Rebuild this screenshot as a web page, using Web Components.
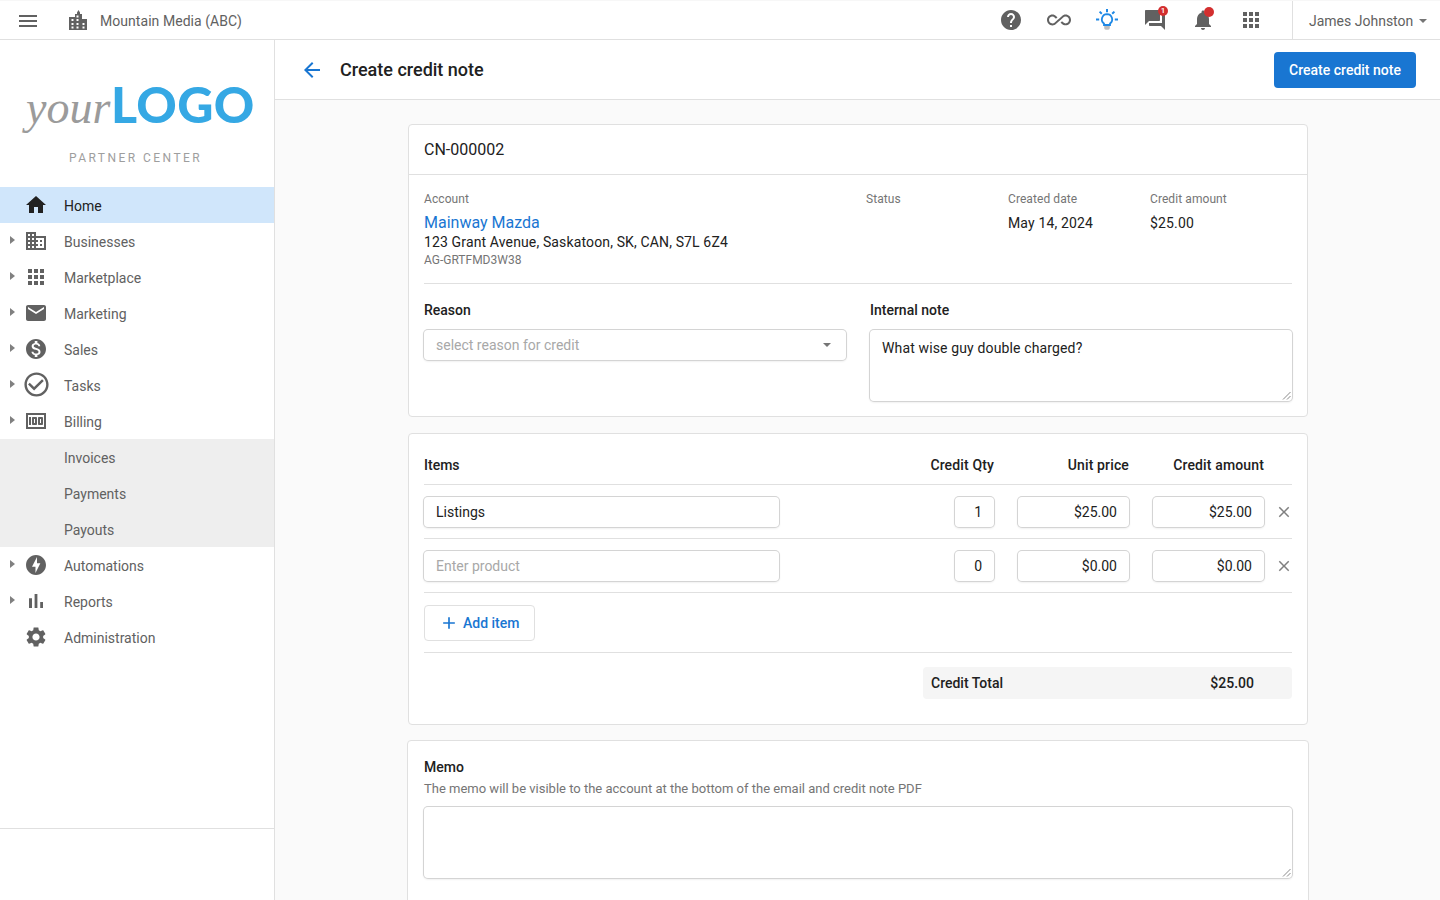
<!doctype html>
<html lang="en">
<head>
<meta charset="utf-8">
<title>Create credit note</title>
<style>
html,body{margin:0;height:100%;overflow:hidden;background:#fafafa}
body{font:14px/20px Roboto,"Liberation Sans",sans-serif;color:#212121}
</style>
</head>
<body>
<app-shell>
  <app-topbar slot="top"></app-topbar>
  <app-sidebar slot="side">
    <nav-item icon="home" active>Home</nav-item>
    <nav-item icon="business" arrow>Businesses</nav-item>
    <nav-item icon="apps" arrow>Marketplace</nav-item>
    <nav-item icon="email" arrow>Marketing</nav-item>
    <nav-item icon="money" arrow>Sales</nav-item>
    <nav-item icon="check" arrow big>Tasks</nav-item>
    <nav-item icon="billing" arrow>Billing</nav-item>
    <nav-item sub>Invoices</nav-item>
    <nav-item sub>Payments</nav-item>
    <nav-item sub>Payouts</nav-item>
    <nav-item icon="bolt" arrow>Automations</nav-item>
    <nav-item icon="bars" arrow>Reports</nav-item>
    <nav-item icon="settings">Administration</nav-item>
  </app-sidebar>
  <page-head slot="head" title="Create credit note" action="Create credit note"></page-head>
  <div slot="main">
    <note-summary></note-summary>
    <note-items></note-items>
    <note-memo></note-memo>
  </div>
</app-shell>

<script>
const P={
menu:'M3 18h18v-2H3v2zm0-5h18v-2H3v2zm0-7v2h18V6H3z',
help:'M12 2C6.48 2 2 6.48 2 12s4.48 10 10 10 10-4.48 10-10S17.52 2 12 2zm1 17h-2v-2h2v2zm2.07-7.75l-.9.92C13.45 12.9 13 13.5 13 15h-2v-.5c0-1.1.45-2.1 1.17-2.83l1.24-1.26c.37-.36.59-.86.59-1.41 0-1.1-.9-2-2-2s-2 .9-2 2H8c0-2.21 1.79-4 4-4s4 1.79 4 4c0 .88-.36 1.68-.93 2.25z',
infinity:'M18.6 6.62c-1.44 0-2.8.56-3.77 1.53L12 10.66 10.48 12h.01L7.8 14.39c-.64.64-1.49.99-2.4.99-1.87 0-3.39-1.51-3.39-3.38S3.53 8.62 5.4 8.62c.91 0 1.76.35 2.44 1.03l1.13 1 1.51-1.34L9.22 8.2C8.2 7.18 6.84 6.62 5.4 6.62 2.42 6.62 0 9.04 0 12s2.42 5.38 5.4 5.38c1.44 0 2.8-.56 3.77-1.53l2.83-2.5.01.01L13.52 12h-.01l2.69-2.39c.64-.64 1.49-.99 2.4-.99 1.87 0 3.39 1.51 3.39 3.38s-1.52 3.38-3.39 3.38c-.9 0-1.76-.35-2.44-1.03l-1.14-1.01-1.51 1.34 1.27 1.12c1.02 1.01 2.37 1.57 3.82 1.57 2.98 0 5.4-2.41 5.4-5.38s-2.42-5.37-5.4-5.37z',
forum:'M21 6h-2v9H6v2c0 .55.45 1 1 1h11l4 4V7c0-.55-.45-1-1-1zm-4 6V3c0-.55-.45-1-1-1H3c-.55 0-1 .45-1 1v14l4-4h10c.55 0 1-.45 1-1z',
bell:'M12 22c1.1 0 2-.9 2-2h-4c0 1.1.89 2 2 2zm6-6v-5c0-3.07-1.64-5.64-4.5-6.32V4c0-.83-.67-1.5-1.5-1.5s-1.5.67-1.5 1.5v.68C7.63 5.36 6 7.92 6 11v5l-2 2v1h16v-1l-2-2z',
apps:'M4 8h4V4H4v4zm6 12h4v-4h-4v4zm-6 0h4v-4H4v4zm0-6h4v-4H4v4zm6 0h4v-4h-4v4zm6-10v4h4V4h-4zm-6 4h4V4h-4v4zm6 6h4v-4h-4v4zm0 6h4v-4h-4v4z',
home:'M10 20v-6h4v6h5v-8h3L12 3 2 12h3v8z',
business:'M12 7V3H2v18h20V7H12zM6 19H4v-2h2v2zm0-4H4v-2h2v2zm0-4H4V9h2v2zm0-4H4V5h2v2zm4 12H8v-2h2v2zm0-4H8v-2h2v2zm0-4H8V9h2v2zm0-4H8V5h2v2zm10 12h-8v-2h2v-2h-2v-2h2v-2h-2V9h8v10zm-2-8h-2v2h2v-2zm0 4h-2v2h2v-2z',
email:'M20 4H4c-1.1 0-1.99.9-1.99 2L2 18c0 1.1.9 2 2 2h16c1.1 0 2-.9 2-2V6c0-1.1-.9-2-2-2zm0 4l-8 5-8-5V6l8 5 8-5v2z',
money:'M12 2C6.48 2 2 6.48 2 12s4.48 10 10 10 10-4.48 10-10S17.52 2 12 2zm1.41 16.09V20h-2.67v-1.93c-1.71-.36-3.16-1.46-3.27-3.4h1.96c.1 1.05.82 1.87 2.65 1.87 1.96 0 2.4-.98 2.4-1.59 0-.83-.44-1.61-2.67-2.14-2.48-.6-4.18-1.62-4.18-3.67 0-1.72 1.39-2.84 3.11-3.21V4h2.67v1.95c1.86.45 2.79 1.86 2.85 3.39H14.3c-.05-1.11-.64-1.87-2.22-1.87-1.5 0-2.4.68-2.4 1.64 0 .84.65 1.39 2.67 1.91s4.18 1.39 4.18 3.91c-.01 1.83-1.38 2.83-3.12 3.16z',
check:'M16.59 7.58L10 14.17l-3.59-3.58L5 12l5 5 8-8zM12 2C6.48 2 2 6.48 2 12s4.48 10 10 10 10-4.48 10-10S17.52 2 12 2zm0 18c-4.42 0-8-3.58-8-8s3.58-8 8-8 8 3.58 8 8-3.58 8-8 8z',
billing:'M5 8h2v8H5zm7 0H9c-.55 0-1 .45-1 1v6c0 .55.45 1 1 1h3c.55 0 1-.45 1-1V9c0-.55-.45-1-1-1zm-1 6h-1v-4h1v4zm7-6h-3c-.55 0-1 .45-1 1v6c0 .55.45 1 1 1h3c.55 0 1-.45 1-1V9c0-.55-.45-1-1-1zm-1 6h-1v-4h1v4zM2 4v16h20V4H2zm2 14V6h16v12H4z',
bolt:'M12 2.02c-5.51 0-9.98 4.47-9.98 9.98s4.47 9.98 9.98 9.98 9.98-4.47 9.98-9.98S17.51 2.02 12 2.02zM11.48 20v-6.26H8L13 4v6.26h3.35L11.48 20z',
bars:'M5 9.2h3V19H5zM10.6 5h2.8v14h-2.8zm5.6 8H19v6h-2.8z',
settings:'M19.14 12.94c.04-.3.06-.61.06-.94 0-.32-.02-.64-.07-.94l2.03-1.58c.18-.14.23-.41.12-.61l-1.92-3.32c-.12-.22-.37-.29-.59-.22l-2.39.96c-.5-.38-1.03-.7-1.62-.94l-.36-2.54c-.04-.24-.24-.41-.48-.41h-3.84c-.24 0-.43.17-.47.41l-.36 2.54c-.59.24-1.13.57-1.62.94l-2.39-.96c-.22-.08-.47 0-.59.22L2.74 8.87c-.12.21-.08.47.12.61l2.03 1.58c-.05.3-.09.63-.09.94s.02.64.07.94l-2.03 1.58c-.18.14-.23.41-.12.61l1.92 3.32c.12.22.37.29.59.22l2.39-.96c.5.38 1.03.7 1.62.94l.36 2.54c.05.24.24.41.48.41h3.84c.24 0 .44-.17.47-.41l.36-2.54c.59-.24 1.13-.56 1.62-.94l2.39.96c.22.08.47 0 .59-.22l1.92-3.32c.12-.22.07-.47-.12-.61l-2.01-1.58zM12 15.6c-1.98 0-3.6-1.62-3.6-3.6s1.62-3.6 3.6-3.6 3.6 1.62 3.6 3.6-1.62 3.6-3.6 3.6z',
back:'M20 11H7.83l5.59-5.59L12 4l-8 8 8 8 1.41-1.41L7.83 13H20v-2z',
add:'M19 13h-6v6h-2v-6H5v-2h6V5h2v6h6v2z',
close:'M19 6.41L17.59 5 12 10.59 6.41 5 5 6.41 10.59 12 5 17.59 6.41 19 12 13.41 17.59 19 19 17.59 13.41 12z',
city:'M3 9h6V6h2V4.5L12.5 2 14 4.5V6h2v5h5v11H3V9zM5.5 11v2h2v-2h-2zm5 0v2h2v-2h-2zm-5 4v2h2v-2h-2zm5 0v2h2v-2h-2zm6 0v2h2v-2h-2zm-11 3.6v2h2v-2h-2zm5 0v2h2v-2h-2zm6 0v2h2v-2h-2zM10.5 7.4v2h2v-2h-2z'
};
const ico=(n,s=24,c='currentColor',extra='')=>`<svg width="${s}" height="${s}" viewBox="0 0 24 24" fill="${c}" style="display:block;flex:none;${extra}"><path fill-rule="evenodd" d="${P[n]}"/></svg>`;
class Base extends HTMLElement{
  constructor(){super();this.attachShadow({mode:'open'})}
  render(h){this.shadowRoot.innerHTML=h}
}
const def=(n,c)=>customElements.define(n,c);

def('app-shell',class extends Base{connectedCallback(){this.render(`<style>
:host{display:grid;grid-template-columns:275px 1fr;grid-template-rows:40px 60px 1fr;height:100vh;overflow:hidden;background:#fafafa}
.top{grid-column:1/3;grid-row:1}.side{grid-column:1;grid-row:2/4;min-height:0}
.head{grid-column:2;grid-row:2}
.main{grid-column:2;grid-row:3;overflow:hidden;padding-top:24px;min-height:0}
</style>
<div class="top"><slot name="top"></slot></div>
<div class="side"><slot name="side"></slot></div>
<div class="head"><slot name="head"></slot></div>
<div class="main"><slot name="main"></slot></div>`)}});

def('app-topbar',class extends Base{connectedCallback(){
const btn=(i,c='')=>`<div class="b">${i}${c}</div>`;
const bulb=`<svg width="24" height="24" viewBox="0 0 24 24" fill="none" stroke="#1e88e5" stroke-width="2"><path d="M12 1v3.2M4.6 3.6l2.2 2.2M19.4 3.6l-2.2 2.2M1 11.5h3.2M19.8 11.5H23"/><path d="M12 6.2a5.2 5.2 0 0 0-3 9.4V17h6v-1.4a5.2 5.2 0 0 0-3-9.4z" stroke-width="1.8" fill="#fff"/><path d="M9.2 18h5.6v2.2a2 2 0 0 1-2 1.6h-1.6a2 2 0 0 1-2-1.6z" fill="#bdbdbd" stroke="none"/></svg>`;
this.render(`<style>
:host{display:flex;align-items:center;height:40px;box-sizing:border-box;background:#fff;border-bottom:1px solid #e0e0e0;border-top:1px solid #f7f7f7;color:#616161;font-size:14px}
.menu{margin-left:16px;margin-top:1px}.city{margin-left:26px}.org{margin-left:10px;margin-top:1px;letter-spacing:.05px}
.icons{margin-left:auto;margin-right:17px;display:flex}
.b{position:relative;width:48px;height:38px;display:flex;align-items:center;justify-content:center}
.badge{position:absolute;left:27px;top:5px;width:10px;height:10px;border-radius:50%;background:#d32f2f;color:#fff;font:500 8px/10px Roboto,sans-serif;text-align:center}
.user{width:148px;box-sizing:border-box;height:38px;border-left:1px solid #e0e0e0;padding:1px 0 0 16px;display:flex;align-items:center}
.car{width:0;height:0;margin-left:6px;border:4px solid transparent;border-top-color:#757575;border-bottom:0}
</style>
<div class="menu">${ico('menu')}</div>
<div class="city">${ico('city')}</div>
<div class="org">Mountain Media (ABC)</div>
<div class="icons">
${btn(ico('help'))}${btn(ico('infinity'))}${btn(bulb)}
${btn(ico('forum'),'<div class="badge">1</div>')}
${btn(ico('bell'),'<div class="badge" style="left:25px;top:6px"></div>')}
${btn(ico('apps'))}
</div>
<div class="user">James Johnston<span class="car"></span></div>`)}});

def('app-sidebar',class extends Base{connectedCallback(){this.render(`<style>
:host{display:flex;flex-direction:column;height:100%;box-sizing:border-box;background:#fff;border-right:1px solid #e0e0e0}
.brand{height:147px;box-sizing:border-box;padding-top:33px}
.logo{display:flex;align-items:baseline;padding-left:26px;height:62px;line-height:62px}
.your{font:italic 400 46px/62px "Liberation Serif",serif;color:#9b9b9b;width:85px;flex:none}
.mark{font:900 50px/62px Lato,sans-serif;color:#35a8e4;letter-spacing:.3px}
.pc{margin-top:15px;padding-left:69px;font-size:12px;line-height:16px;letter-spacing:2.45px;color:#9e9e9e}
.nav{flex:1}
.foot{height:72px;border-top:1px solid #e0e0e0;box-sizing:border-box;flex:none}
</style>
<div class="brand"><div class="logo"><span class="your">your</span><span class="mark">LOGO</span></div><div class="pc">PARTNER CENTER</div></div>
<div class="nav"><slot></slot></div><div class="foot"></div>`)}});

def('nav-item',class extends Base{connectedCallback(){
const i=this.getAttribute('icon');
this.render(`<style>
:host{display:flex;align-items:center;height:36px;color:#616161;font-size:14px;position:relative}
:host([active]){background:#d0e6fb;color:#212121}
:host([sub]){background:#eeeeee}
.ar{width:0;height:0;border:4.5px solid transparent;border-left:5px solid #808080;border-right:0;margin:-2px 0 0 10px;flex:none}
.sl{width:15px;flex:none}
.ic{width:30px;margin-left:6px;flex:none;display:flex;justify-content:center;margin-top:-1px}
.t{margin-left:13px;padding-top:1px}
:host([sub]) .t{margin-left:64px}
</style>
${this.hasAttribute('sub')?'':(this.hasAttribute('arrow')?'<span class="ar"></span>':'<span class="sl"></span>')}
${i?`<span class="ic">${ico(i,this.hasAttribute('big')?29:24)}</span>`:''}
<span class="t"><slot></slot></span>`)}});

def('page-head',class extends Base{connectedCallback(){this.render(`<style>
:host{display:flex;align-items:center;height:60px;box-sizing:border-box;background:#fff;border-bottom:1px solid #e0e0e0;padding:0 24px 0 25px}
.t{margin-left:16px;font-size:18px;font-weight:500;line-height:24px;color:#212121}
.a{margin-left:auto;height:36px;width:142px;background:#1976d2;color:#fff;border-radius:4px;font-weight:500;display:flex;align-items:center;justify-content:center}
</style>
${ico('back',24,'#1976d2')}
<div class="t">${this.getAttribute('title')}</div>
<div class="a">${this.getAttribute('action')}</div>`);this.removeAttribute('title')}});

def('x-panel',class extends Base{connectedCallback(){this.render(`<style>
:host{display:block;box-sizing:border-box;width:900px;margin-left:133px;background:#fff;border:1px solid #e0e0e0;border-radius:4px}
:host([wide]){width:902px;margin-left:132px}
</style><slot></slot>`)}});

def('x-field',class extends Base{connectedCallback(){
const a=n=>this.getAttribute(n);
const v=a('value'),ph=a('placeholder');
const grip=this.hasAttribute('multi')?`<svg class="g" width="9" height="9" viewBox="0 0 9 9" stroke="#8a8a8a" fill="none"><path d="M1 8.5L8.5 1M5 8.5L8.5 5"/></svg>`:'';
this.render(`<style>
:host{display:block;position:relative;box-sizing:border-box;height:30px;background:#fff;border-radius:4px;box-shadow:0 0 0 1px #d4d4d4,0 1px 2px 1px rgba(0,0,0,.06);font-size:14px;padding:5px 12px;color:#212121;text-align:${a('align')||'left'}}
:host([multi]){padding-top:8px;letter-spacing:.14px}
.ph{color:#a8a8a8}
.car{position:absolute;right:15px;top:13px;width:0;height:0;border:4px solid transparent;border-top-color:#757575;border-bottom:0}
.g{position:absolute;right:1px;bottom:1px}
</style>
${v!==null?`<span>${v}</span>`:ph?`<span class="ph">${ph}</span>`:''}
${this.hasAttribute('select')?'<span class="car"></span>':''}${grip}`)}});

def('note-summary',class extends Base{connectedCallback(){this.render(`<style>
:host{display:block}
.hd{height:49px;border-bottom:1px solid #e0e0e0;padding-left:15px;font-size:16px;line-height:50px;color:#212121}
.body{padding:16px 15px 15px}
.meta{display:grid;grid-template-columns:1fr 142px 142px 142px;padding-bottom:14px;border-bottom:1px solid #e0e0e0}
.l{font-size:12px;line-height:16px;color:#757575;margin-bottom:6px;letter-spacing:.08px}
.v{line-height:20px;color:#212121;letter-spacing:.15px}
.link{font-size:16px;line-height:20px;color:#1976d2}
.addr{line-height:18px;letter-spacing:.135px}.id{font-size:12px;line-height:18px;color:#757575}
.form{display:grid;grid-template-columns:422px 422px;column-gap:24px;align-items:start;padding-top:16px}
.fl{font-weight:500;line-height:20px;margin-bottom:10px}
</style>
<x-panel>
<div class="hd">CN-000002</div>
<div class="body">
<div class="meta">
<div><div class="l">Account</div><div class="link">Mainway Mazda</div><div class="addr">123 Grant Avenue, Saskatoon, SK, CAN, S7L 6Z4</div><div class="id">AG-GRTFMD3W38</div></div>
<div><div class="l">Status</div></div>
<div><div class="l">Created date</div><div class="v">May 14, 2024</div></div>
<div><div class="l">Credit amount</div><div class="v">$25.00</div></div>
</div>
<div class="form">
<div><div class="fl">Reason</div><x-field select placeholder="select reason for credit"></x-field></div>
<div><div class="fl">Internal note</div><x-field multi value="What wise guy double charged?" style="height:71px"></x-field></div>
</div>
</div>
</x-panel>`)}});

def('item-row',class extends Base{connectedCallback(){
const a=n=>this.getAttribute(n);
const head=this.hasAttribute('head');
const cell=(v,w,ml)=>head?`<div class="h" style="width:${w}px;margin-left:${ml}px">${v}</div>`:
 `<x-field style="width:${w}px;margin-left:${ml}px;flex:none" align="right" value="${v}"></x-field>`;
this.render(`<style>
:host{display:flex;align-items:center;height:53px;border-bottom:1px solid #e0e0e0}
:host([head]){align-items:flex-start;padding-top:21px;box-sizing:content-box;height:29px;font-weight:500}
.p{width:355px;flex:none}
.sp{flex:1}
.h{display:flex;justify-content:flex-end;white-space:nowrap;line-height:20px;flex:none;letter-spacing:.14px}
.x{width:28px;display:flex;justify-content:flex-end;flex:none;color:#808080}
</style>
${head?`<div class="p">${a('name')}</div>`:`<x-field class="p" ${a('name')?`value="${a('name')}"`:'placeholder="Enter product"'}></x-field>`}
<div class="sp"></div>
${cell(a('qty'),39,0)}${cell(a('price'),111,24)}${cell(a('amount'),111,24)}
<div class="x">${head?'':ico('close',18,'currentColor','margin-right:-1px')}</div>`)}});

def('note-items',class extends Base{connectedCallback(){this.render(`<style>
:host{display:block;margin-top:16px}
.in{padding:0 15px 25px}
.add{padding:12px 0 11px;border-bottom:1px solid #e0e0e0}
.btn{display:flex;align-items:center;box-sizing:border-box;width:111px;height:36px;border:1px solid #e0e0e0;border-radius:4px;color:#1976d2;font-weight:500;padding-left:14px}
.btn span{margin-left:4px}
.tot{margin:14px 0 0 auto;width:369px;height:32px;box-sizing:border-box;background:#f5f5f5;border-radius:4px;display:flex;justify-content:space-between;align-items:center;padding:0 38px 0 8px;font-weight:500}
</style>
<x-panel>
<div class="in">
<item-row head name="Items" qty="Credit Qty" price="Unit price" amount="Credit amount"></item-row>
<item-row name="Listings" qty="1" price="$25.00" amount="$25.00"></item-row>
<item-row qty="0" price="$0.00" amount="$0.00"></item-row>
<div class="add"><div class="btn">${ico('add',20)}<span>Add item</span></div></div>
<div class="tot"><span>Credit Total</span><span>$25.00</span></div>
</div>
</x-panel>`)}});

def('note-memo',class extends Base{connectedCallback(){this.render(`<style>
:host{display:block;margin-top:15px}
.in{padding:16px 16px 60px}
.l{font-weight:500;line-height:20px}
.h{font-size:13px;line-height:18px;color:#757575;margin-top:3px;margin-bottom:9px}
</style>
<x-panel wide><div class="in">
<div class="l">Memo</div>
<div class="h">The memo will be visible to the account at the bottom of the email and credit note PDF</div>
<x-field multi style="height:71px"></x-field>
</div></x-panel>`)}});
</script>
</body>
</html>
